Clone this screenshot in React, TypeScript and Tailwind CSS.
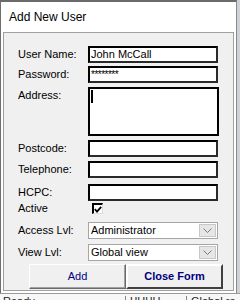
import React from "react";

const font = { fontFamily: '"Liberation Sans", Arial, sans-serif' };

function Field({ label, value, top, mono }: { label: string; value?: string; top: string; mono?: boolean }) {
  return (
    <div className={`flex items-center ${top}`}>
      <div className="w-[70px] text-[11px] leading-none text-black">{label}</div>
      <div className="h-[17px] w-[130px] border-2 border-t-black border-l-black border-r-[#2a2a2a] border-b-[#2a2a2a] bg-white pl-[1px] text-[11px] leading-[13px] text-black">
        {mono ? <span className="text-[10px] leading-[10px] tracking-[-0.5px]">{value}</span> : value}
      </div>
    </div>
  );
}

function Combo({ label, value, top }: { label: string; value: string; top: string }) {
  return (
    <div className={`flex items-center ${top}`}>
      <div className="w-[70px] text-[11px] leading-none text-black">{label}</div>
      <div className="flex h-[17px] w-[130px] items-center border border-[#a6a6a6] bg-white pl-[2px]">
        <span className="flex-1 text-[11px] leading-none text-black">{value}</span>
        <div className="mr-[1px] flex h-[13px] w-[17px] items-center justify-center border border-[#c8c8c8] bg-[#e6e6e6]">
          <svg width="9" height="5" viewBox="0 0 9 5">
            <path d="M0.5 0.5 L4.5 4.5 L8.5 0.5" fill="none" stroke="#7a7a7a" strokeWidth="1" />
          </svg>
        </div>
      </div>
    </div>
  );
}

export default function App() {
  return (
    <div className="relative h-[300px] w-[240px] overflow-hidden bg-[#dcdcdc]" style={font}>
      {/* stuff behind the dialog */}
      <div className="absolute right-0 top-0 h-full w-[4px] border-l border-[#9a9a9a] bg-[#cfd3d8]" />
      <div className="absolute bottom-0 left-0 flex h-[7px] w-full overflow-hidden border-t border-[#9a9a9a] bg-[#f7f7f7] text-[11px] leading-none text-[#222]">
        <span className="ml-[3px] mt-[2px] w-[122px]">Ready</span>
        <span className="mt-[2px] w-[61px] border-l border-[#888] pl-[4px]">ЧНЧН</span>
        <span className="mt-[2px] border-l border-[#888] pl-[4px]">Global re</span>
      </div>

      {/* dialog window */}
      <div className="absolute left-0 top-0 flex h-[293px] w-[237px] flex-col border-l border-r border-t-2 border-l-[#6e6e6e] border-r-[#8a8a8a] border-t-[#6a6a6a] bg-white">
        <div className="flex h-[30px] items-center pl-[8px] text-[12px] text-black">Add New User</div>
        <div className="mx-[2px] mb-[2px] flex flex-1 flex-col border border-[#a0a0a0] bg-[#f0f0f0] pl-[14px]">
          <Field label="User Name:" value="John McCall" top="mt-[13px]" />
          <Field label="Password:" value="********" top="mt-[3px]" mono />
          <div className="mt-[4px] flex">
            <div className="w-[70px] pt-[3px] text-[11px] leading-none text-black">Address:</div>
            <div className="h-[49px] w-[131px] border-2 border-black bg-white pl-[1px] pt-[1px]">
              <div className="h-[13px] w-[2px] bg-black" />
            </div>
          </div>
          <Field label="Postcode:" top="mt-[4px]" />
          <Field label="Telephone:" top="mt-[4px]" />
          <Field label="HCPC:" top="mt-[6px]" />
          <div className="mt-[2px] flex items-center">
            <div className="w-[74px] text-[11px] leading-none text-black">Active</div>
            <div className="flex h-[11px] w-[11px] items-center justify-center border-l-2 border-t-2 border-b border-r border-l-black border-t-black border-b-[#dcdcdc] border-r-[#dcdcdc] bg-white">
              <svg width="8" height="7" viewBox="0 0 8 7">
                <path d="M0.8 3.2 L3 5.6 L7.2 0.8" fill="none" stroke="black" strokeWidth="1.8" />
              </svg>
            </div>
          </div>
          <Combo label="Access Lvl:" value="Administrator" top="mt-[8px]" />
          <Combo label="View Lvl:" value="Global view" top="mt-[5px]" />
          <div className="mt-[3px] ml-[11px] flex">
            <button className="flex h-[25px] w-[97px] items-center justify-center border border-b-[#696969] border-l-white border-r-[#696969] border-t-white bg-[#f0f0f0] text-[11px] text-[#000080] shadow-[inset_-1px_-1px_0_#a0a0a0]">
              Add
            </button>
            <button className="flex h-[25px] w-[97px] items-center justify-center border-2 border-b-[#404040] border-l-white border-r-[#404040] border-t-white bg-[#f0f0f0] text-[11px] font-bold text-[#000080]">
              Close Form
            </button>
          </div>
        </div>
      </div>
    </div>
  );
}
